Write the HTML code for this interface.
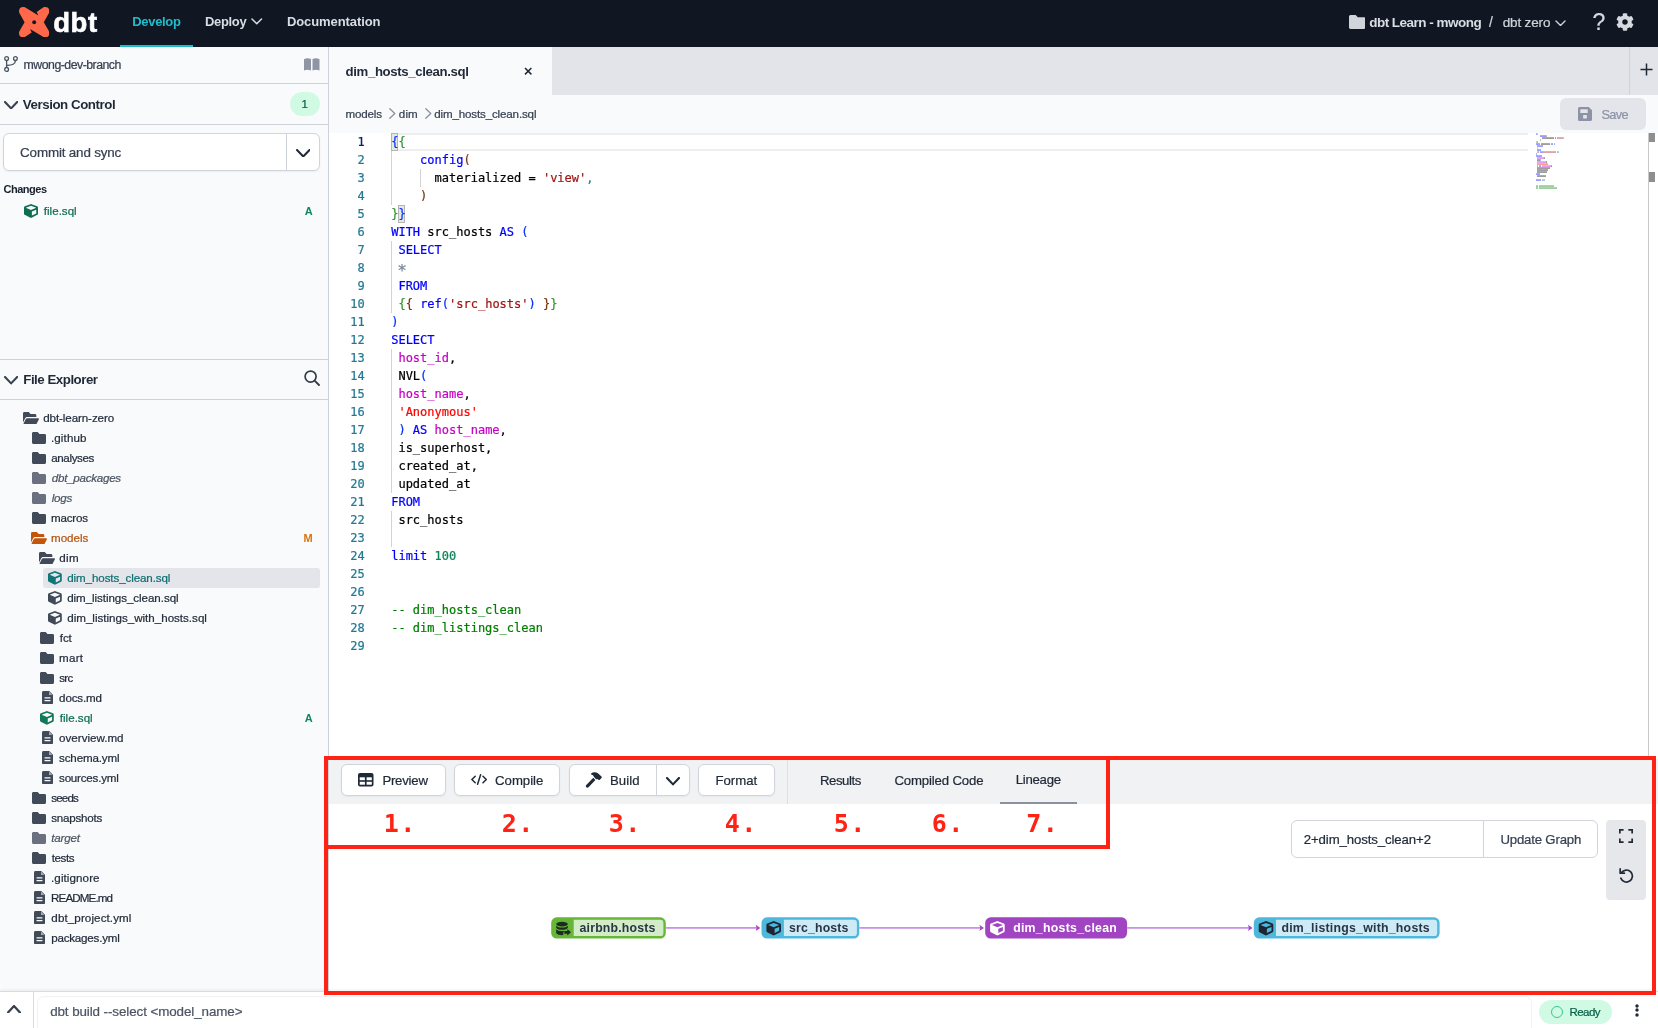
<!DOCTYPE html>
<html lang="en"><head><meta charset="utf-8"><title>dbt Cloud IDE</title><style>
html,body{margin:0;padding:0;}
body{width:1658px;height:1028px;overflow:hidden;background:#fff;font-family:"Liberation Sans",sans-serif;}
#app{position:relative;width:1658px;height:1028px;overflow:hidden;will-change:transform;}
.b{position:absolute;display:block;}
.t{position:absolute;white-space:pre;display:block;-webkit-text-stroke:0.22px currentColor;}
.mo{font-family:"DejaVu Sans Mono","Liberation Mono",monospace;}
.ln{font-family:"DejaVu Sans Mono","Liberation Mono",monospace;font-size:12px;line-height:18px;text-align:right;}
.cd{font-family:"DejaVu Sans Mono","Liberation Mono",monospace;font-size:12px;line-height:18px;}
</style></head>
<body><div id="app">
<div class="b" style="left:0px;top:0px;width:1658px;height:47px;background:#111722;"></div>
<svg class="b" style="left:18.8px;top:6.8px;" width="30.4" height="30.4" viewBox="0 0 30.4 30.4" preserveAspectRatio="none"><path fill="#ff694a" d="M0 4.2C0 1.6 1.6 0 4.2 0C5 0 5.6.15 6.3.55L19.4 8.5L17.7 4.9L24.1.55C24.8.15 25.4 0 26.2 0C28.8 0 30.4 1.6 30.4 4.2C30.4 5 30.25 5.6 29.85 6.3L24.8 15.2L29.85 24.1C30.25 24.8 30.4 25.4 30.4 26.2C30.4 28.8 28.8 30.4 26.2 30.4C25.4 30.4 24.8 30.25 24.1 29.85L11 21.9L12.7 25.5L6.3 29.85C5.6 30.25 5 30.4 4.2 30.4C1.6 30.4 0 28.8 0 26.2C0 25.4.15 24.8.55 24.1L5.6 15.2L.55 6.3C.15 5.6 0 5 0 4.2Z"/><circle cx="15.2" cy="15.2" r="1.95" fill="#111722"/></svg>
<span id="t1" class="t" style="left:53.27px;top:1.97px;font-size:27.5px;line-height:41px;color:#ffffff;font-weight:700;-webkit-text-stroke:0;letter-spacing:0.555px;-webkit-text-stroke:0.6px #fff;">dbt</span>
<span id="t2" class="t" style="left:132.27px;top:12.00px;font-size:13px;line-height:20px;color:#1cbecb;font-weight:700;-webkit-text-stroke:0;letter-spacing:-0.321px;">Develop</span>
<div class="b" style="left:120px;top:45px;width:73px;height:2px;background:#1cbecb;"></div>
<span id="t3" class="t" style="left:204.97px;top:12.00px;font-size:13px;line-height:20px;color:#dadde3;font-weight:700;-webkit-text-stroke:0;letter-spacing:-0.330px;">Deploy</span>
<svg class="b" style="left:251px;top:18.2px;" width="11.5" height="6.8" viewBox="0 0 11.5 6.8" preserveAspectRatio="none"><path d="M1 1l4.75 4.8L10.5 1" fill="none" stroke="#dadde3" stroke-width="1.5" stroke-linecap="round" stroke-linejoin="round"/></svg>
<span id="t4" class="t" style="left:286.97px;top:12.00px;font-size:13px;line-height:20px;color:#dadde3;font-weight:700;-webkit-text-stroke:0;letter-spacing:-0.091px;">Documentation</span>
<svg class="b" style="left:1348.5px;top:15px;" width="16.5" height="14" viewBox="0 64 512 384" preserveAspectRatio="none"><path fill="#d1d5db" d="M464 128H272l-64-64H48C21.49 64 0 85.49 0 112v288c0 26.51 21.49 48 48 48h416c26.51 0 48-21.49 48-48V176c0-26.51-21.49-48-48-48z"/></svg>
<span id="t5" class="t" style="left:1369.19px;top:12.72px;font-size:13.5px;line-height:20px;color:#dadde3;font-weight:700;-webkit-text-stroke:0;letter-spacing:-0.518px;">dbt Learn - mwong</span>
<span id="t6" class="t" style="left:1489.00px;top:12.05px;font-size:14px;line-height:21px;color:#d1d5db;">/</span>
<span id="t7" class="t" style="left:1502.67px;top:12.72px;font-size:13.5px;line-height:20px;color:#d1d5db;letter-spacing:-0.138px;">dbt zero</span>
<svg class="b" style="left:1555px;top:19.5px;" width="11" height="6.5" viewBox="0 0 11 6.5" preserveAspectRatio="none"><path d="M1 1l4.5 4.5L10 1" fill="none" stroke="#d1d5db" stroke-width="1.4" stroke-linecap="round" stroke-linejoin="round"/></svg>
<span id="t8" class="t" style="left:1592.50px;top:5.23px;font-size:23px;line-height:34px;color:#d6d9e0;">?</span>
<svg class="b" style="left:1616px;top:13px;" width="18" height="18" viewBox="0 0 512 512" preserveAspectRatio="none"><path fill="#d6d9e0" d="M487.4 315.7l-42.6-24.6c4.3-23.2 4.3-47 0-70.2l42.6-24.6c4.9-2.8 7.1-8.6 5.5-14-11.1-35.6-30-67.8-54.7-94.6-3.8-4.1-10-5.1-14.8-2.3L380.8 110c-17.9-15.4-38.5-27.3-60.8-35.1V25.8c0-5.6-3.9-10.5-9.4-11.7-36.7-8.2-74.3-7.8-109.2 0-5.5 1.2-9.4 6.1-9.4 11.7V75c-22.2 7.9-42.8 19.8-60.8 35.1L88.7 85.5c-4.9-2.8-11-1.9-14.8 2.3-24.7 26.7-43.6 58.9-54.7 94.6-1.7 5.4.6 11.2 5.5 14L67.3 221c-4.3 23.2-4.3 47 0 70.2l-42.6 24.6c-4.9 2.8-7.1 8.6-5.5 14 11.1 35.6 30 67.8 54.7 94.6 3.8 4.1 10 5.1 14.8 2.3l42.6-24.6c17.9 15.4 38.5 27.3 60.8 35.1v49.2c0 5.6 3.9 10.5 9.4 11.7 36.7 8.2 74.3 7.8 109.2 0 5.5-1.2 9.4-6.1 9.4-11.7v-49.2c22.2-7.9 42.8-19.8 60.8-35.1l42.6 24.6c4.9 2.8 11 1.9 14.8-2.3 24.7-26.7 43.6-58.9 54.7-94.6 1.5-5.5-.7-11.3-5.6-14.1zM256 336c-44.1 0-80-35.9-80-80s35.9-80 80-80 80 35.9 80 80-35.9 80-80 80z"/></svg>
<div class="b" style="left:0px;top:47px;width:328px;height:944px;background:#f9fafb;"></div>
<div class="b" style="left:328px;top:47px;width:1px;height:944px;background:#cdd1da;"></div>
<svg class="b" style="left:4px;top:56px;" width="14" height="16" viewBox="0 0 14 16" preserveAspectRatio="none"><g fill="none" stroke="#4b5563" stroke-width="1.3"><circle cx="2.6" cy="2.6" r="1.9"/><circle cx="11.4" cy="2.6" r="1.9"/><circle cx="2.6" cy="13.4" r="1.9"/><path d="M2.6 4.5v7M11.4 4.5c0 3.8-3 4.6-8.8 5"/></g></svg>
<span id="t9" class="t" style="left:23.61px;top:55.74px;font-size:12.3px;line-height:18px;color:#374151;letter-spacing:-0.502px;">mwong-dev-branch</span>
<svg class="b" style="left:304px;top:58px;" width="15.5" height="12.6" viewBox="0 0 15.5 12.6" preserveAspectRatio="none"><path fill="#8f95a3" d="M0 1.2C2.2 0 4.6 0 7 1v11.5C4.6 11.4 2.2 11.4 0 12.6z"/><path fill="#8f95a3" d="M15.5 1.2C13.300 0 10.900 0 8.5 1v11.5c2.4-1.1 4.8-1.1 7 .1z"/></svg>
<div class="b" style="left:0px;top:83px;width:328px;height:1px;background:#cdd1da;"></div>
<svg class="b" style="left:3.9px;top:100.8px;" width="14.2" height="8.4" viewBox="0 0 14.2 8.4" preserveAspectRatio="none"><path d="M1 1l6.1 6.4L13.2 1" fill="none" stroke="#374151" stroke-width="2.1" stroke-linecap="round" stroke-linejoin="round"/></svg>
<span id="t10" class="t" style="left:22.84px;top:94.99px;font-size:13.3px;line-height:20px;color:#1f2937;font-weight:700;-webkit-text-stroke:0;letter-spacing:-0.442px;">Version Control</span>
<div class="b" style="left:289.5px;top:92px;width:30px;height:23.5px;background:#d1fae5;border-radius:12px;"></div>
<span id="t11" class="t" style="left:301.60px;top:95.82px;font-size:11.5px;line-height:17px;color:#065f46;">1</span>
<div class="b" style="left:0px;top:124px;width:328px;height:1px;background:#cdd1da;"></div>
<div class="b" style="left:3px;top:133px;width:317px;height:38px;background:#fff;border:1px solid #d1d5db;border-radius:6px;box-sizing:border-box;box-shadow:0 1px 2px rgba(0,0,0,.06);"></div>
<div class="b" style="left:286px;top:134px;width:1px;height:35.5px;background:#cdd1da;"></div>
<span id="t12" class="t" style="left:20.09px;top:142.86px;font-size:13.4px;line-height:20px;color:#374151;letter-spacing:-0.157px;">Commit and sync</span>
<svg class="b" style="left:295.5px;top:148.5px;" width="14.5" height="8.5" viewBox="0 0 14.5 8.5" preserveAspectRatio="none"><path d="M1 1l6.25 6.5L13.5 1" fill="none" stroke="#1f2937" stroke-width="2" stroke-linecap="round" stroke-linejoin="round"/></svg>
<span id="t13" class="t" style="left:3.41px;top:181.19px;font-size:11px;line-height:16px;color:#17202e;font-weight:700;-webkit-text-stroke:0;letter-spacing:-0.468px;">Changes</span>
<svg class="b" style="left:23.8px;top:204.3px;" width="14" height="14" viewBox="0 0 512 512" preserveAspectRatio="none"><path fill="#0f6e4f" d="M239.1 6.3l-208 78c-18.7 7-31.1 25-31.1 45v225.1c0 18.2 10.3 34.8 26.5 42.9l208 104c13.5 6.8 29.4 6.8 42.9 0l208-104c16.3-8.1 26.5-24.8 26.5-42.9V129.3c0-20-12.4-37.9-31.1-44.9l-208-78C262 2.2 250 2.2 239.1 6.3zM256 68.4l192 72v1.1l-192 78-192-78v-1.1l192-72zm32 356V275.5l160-65v133.9l-160 80z"/></svg>
<span id="t14" class="t" style="left:43.84px;top:202.48px;font-size:11.6px;line-height:17px;color:#0f6e4f;letter-spacing:-0.003px;">file.sql</span>
<span id="t15" class="t" style="left:304.81px;top:203.19px;font-size:11px;line-height:16px;color:#0a8a5a;font-weight:700;-webkit-text-stroke:0;">A</span>
<div class="b" style="left:0px;top:359px;width:328px;height:1px;background:#cdd1da;"></div>
<svg class="b" style="left:3.9px;top:376.3px;" width="14.2" height="8.4" viewBox="0 0 14.2 8.4" preserveAspectRatio="none"><path d="M1 1l6.1 6.4L13.2 1" fill="none" stroke="#374151" stroke-width="2.1" stroke-linecap="round" stroke-linejoin="round"/></svg>
<span id="t16" class="t" style="left:23.27px;top:369.99px;font-size:13.3px;line-height:20px;color:#1f2937;font-weight:700;-webkit-text-stroke:0;letter-spacing:-0.483px;">File Explorer</span>
<svg class="b" style="left:304px;top:370.3px;" width="16" height="16" viewBox="0 0 16 16" preserveAspectRatio="none"><circle cx="6.6" cy="6.6" r="5.5" fill="none" stroke="#333d4c" stroke-width="1.7"/><path d="M10.6 10.6L15 15" stroke="#333d4c" stroke-width="1.9" stroke-linecap="round"/></svg>
<div class="b" style="left:0px;top:399px;width:328px;height:1px;background:#cdd1da;"></div>
<svg class="b" style="left:23px;top:412px;" width="16" height="12.3" viewBox="0 64 576 384" preserveAspectRatio="none"><path fill="#404a59" d="M572.694 292.093L500.27 416.248A63.997 63.997 0 0 1 444.989 448H45.025c-18.523 0-30.064-20.093-20.731-36.093l72.424-124.155A64 64 0 0 1 152 256h399.964c18.523 0 30.064 20.093 20.73 36.093zM152 224h328v-48c0-26.51-21.49-48-48-48H272l-64-64H48C21.49 64 0 85.49 0 112v278.046l69.077-118.418C86.214 242.25 117.989 224 152 224z"/></svg>
<span id="t17" class="t" style="left:43.22px;top:409.48px;font-size:11.6px;line-height:17px;color:#1f2937;letter-spacing:-0.096px;">dbt-learn-zero</span>
<svg class="b" style="left:32px;top:432.3px;" width="14" height="12.1" viewBox="0 64 512 384" preserveAspectRatio="none"><path fill="#404a59" d="M464 128H272l-64-64H48C21.49 64 0 85.49 0 112v288c0 26.51 21.49 48 48 48h416c26.51 0 48-21.49 48-48V176c0-26.51-21.49-48-48-48z"/></svg>
<span id="t18" class="t" style="left:50.89px;top:429.48px;font-size:11.6px;line-height:17px;color:#1f2937;letter-spacing:0.137px;">.github</span>
<svg class="b" style="left:32px;top:452.3px;" width="14" height="12.1" viewBox="0 64 512 384" preserveAspectRatio="none"><path fill="#404a59" d="M464 128H272l-64-64H48C21.49 64 0 85.49 0 112v288c0 26.51 21.49 48 48 48h416c26.51 0 48-21.49 48-48V176c0-26.51-21.49-48-48-48z"/></svg>
<span id="t19" class="t" style="left:51.22px;top:449.48px;font-size:11.6px;line-height:17px;color:#1f2937;letter-spacing:-0.376px;">analyses</span>
<svg class="b" style="left:32px;top:472.3px;" width="14" height="12.1" viewBox="0 64 512 384" preserveAspectRatio="none"><path fill="#6b7080" d="M464 128H272l-64-64H48C21.49 64 0 85.49 0 112v288c0 26.51 21.49 48 48 48h416c26.51 0 48-21.49 48-48V176c0-26.51-21.49-48-48-48z"/></svg>
<span id="t20" class="t" style="left:51.81px;top:469.48px;font-size:11.6px;line-height:17px;color:#4b5563;font-style:italic;letter-spacing:-0.260px;">dbt_packages</span>
<svg class="b" style="left:32px;top:492.3px;" width="14" height="12.1" viewBox="0 64 512 384" preserveAspectRatio="none"><path fill="#6b7080" d="M464 128H272l-64-64H48C21.49 64 0 85.49 0 112v288c0 26.51 21.49 48 48 48h416c26.51 0 48-21.49 48-48V176c0-26.51-21.49-48-48-48z"/></svg>
<span id="t21" class="t" style="left:51.83px;top:489.48px;font-size:11.6px;line-height:17px;color:#4b5563;font-style:italic;letter-spacing:-0.295px;">logs</span>
<svg class="b" style="left:32px;top:512.3px;" width="14" height="12.1" viewBox="0 64 512 384" preserveAspectRatio="none"><path fill="#404a59" d="M464 128H272l-64-64H48C21.49 64 0 85.49 0 112v288c0 26.51 21.49 48 48 48h416c26.51 0 48-21.49 48-48V176c0-26.51-21.49-48-48-48z"/></svg>
<span id="t22" class="t" style="left:51.03px;top:509.48px;font-size:11.6px;line-height:17px;color:#1f2937;letter-spacing:-0.210px;">macros</span>
<svg class="b" style="left:31px;top:532px;" width="16" height="12.3" viewBox="0 64 576 384" preserveAspectRatio="none"><path fill="#c2560c" d="M572.694 292.093L500.27 416.248A63.997 63.997 0 0 1 444.989 448H45.025c-18.523 0-30.064-20.093-20.731-36.093l72.424-124.155A64 64 0 0 1 152 256h399.964c18.523 0 30.064 20.093 20.73 36.093zM152 224h328v-48c0-26.51-21.49-48-48-48H272l-64-64H48C21.49 64 0 85.49 0 112v278.046l69.077-118.418C86.214 242.25 117.989 224 152 224z"/></svg>
<span id="t23" class="t" style="left:51.03px;top:529.48px;font-size:11.6px;line-height:17px;color:#b4530d;letter-spacing:-0.021px;">models</span>
<span id="t24" class="t" style="left:303.57px;top:530.19px;font-size:11px;line-height:16px;color:#d9730d;font-weight:700;-webkit-text-stroke:0;">M</span>
<svg class="b" style="left:39px;top:552px;" width="16" height="12.3" viewBox="0 64 576 384" preserveAspectRatio="none"><path fill="#404a59" d="M572.694 292.093L500.27 416.248A63.997 63.997 0 0 1 444.989 448H45.025c-18.523 0-30.064-20.093-20.731-36.093l72.424-124.155A64 64 0 0 1 152 256h399.964c18.523 0 30.064 20.093 20.73 36.093zM152 224h328v-48c0-26.51-21.49-48-48-48H272l-64-64H48C21.49 64 0 85.49 0 112v278.046l69.077-118.418C86.214 242.25 117.989 224 152 224z"/></svg>
<span id="t25" class="t" style="left:59.22px;top:549.48px;font-size:11.6px;line-height:17px;color:#1f2937;letter-spacing:0.333px;">dim</span>
<div class="b" style="left:43px;top:567.5px;width:276.5px;height:20px;background:#e3e5ea;border-radius:3px;"></div>
<svg class="b" style="left:48px;top:571px;" width="13.8" height="13.8" viewBox="0 0 512 512" preserveAspectRatio="none"><path fill="#0f7577" d="M239.1 6.3l-208 78c-18.7 7-31.1 25-31.1 45v225.1c0 18.2 10.3 34.8 26.5 42.9l208 104c13.5 6.8 29.4 6.8 42.9 0l208-104c16.3-8.1 26.5-24.8 26.5-42.9V129.3c0-20-12.4-37.9-31.1-44.9l-208-78C262 2.2 250 2.2 239.1 6.3zM256 68.4l192 72v1.1l-192 78-192-78v-1.1l192-72zm32 356V275.5l160-65v133.9l-160 80z"/></svg>
<span id="t26" class="t" style="left:67.22px;top:569.48px;font-size:11.6px;line-height:17px;color:#0f6f70;letter-spacing:-0.103px;">dim_hosts_clean.sql</span>
<svg class="b" style="left:48px;top:591px;" width="13.8" height="13.8" viewBox="0 0 512 512" preserveAspectRatio="none"><path fill="#404a59" d="M239.1 6.3l-208 78c-18.7 7-31.1 25-31.1 45v225.1c0 18.2 10.3 34.8 26.5 42.9l208 104c13.5 6.8 29.4 6.8 42.9 0l208-104c16.3-8.1 26.5-24.8 26.5-42.9V129.3c0-20-12.4-37.9-31.1-44.9l-208-78C262 2.2 250 2.2 239.1 6.3zM256 68.4l192 72v1.1l-192 78-192-78v-1.1l192-72zm32 356V275.5l160-65v133.9l-160 80z"/></svg>
<span id="t27" class="t" style="left:67.22px;top:589.48px;font-size:11.6px;line-height:17px;color:#1f2937;letter-spacing:-0.067px;">dim_listings_clean.sql</span>
<svg class="b" style="left:48px;top:611px;" width="13.8" height="13.8" viewBox="0 0 512 512" preserveAspectRatio="none"><path fill="#404a59" d="M239.1 6.3l-208 78c-18.7 7-31.1 25-31.1 45v225.1c0 18.2 10.3 34.8 26.5 42.9l208 104c13.5 6.8 29.4 6.8 42.9 0l208-104c16.3-8.1 26.5-24.8 26.5-42.9V129.3c0-20-12.4-37.9-31.1-44.9l-208-78C262 2.2 250 2.2 239.1 6.3zM256 68.4l192 72v1.1l-192 78-192-78v-1.1l192-72zm32 356V275.5l160-65v133.9l-160 80z"/></svg>
<span id="t28" class="t" style="left:67.22px;top:609.48px;font-size:11.6px;line-height:17px;color:#1f2937;letter-spacing:-0.006px;">dim_listings_with_hosts.sql</span>
<svg class="b" style="left:40px;top:632.3px;" width="14" height="12.1" viewBox="0 64 512 384" preserveAspectRatio="none"><path fill="#404a59" d="M464 128H272l-64-64H48C21.49 64 0 85.49 0 112v288c0 26.51 21.49 48 48 48h416c26.51 0 48-21.49 48-48V176c0-26.51-21.49-48-48-48z"/></svg>
<span id="t29" class="t" style="left:59.84px;top:629.48px;font-size:11.6px;line-height:17px;color:#1f2937;letter-spacing:-0.147px;">fct</span>
<svg class="b" style="left:40px;top:652.3px;" width="14" height="12.1" viewBox="0 64 512 384" preserveAspectRatio="none"><path fill="#404a59" d="M464 128H272l-64-64H48C21.49 64 0 85.49 0 112v288c0 26.51 21.49 48 48 48h416c26.51 0 48-21.49 48-48V176c0-26.51-21.49-48-48-48z"/></svg>
<span id="t30" class="t" style="left:59.03px;top:649.48px;font-size:11.6px;line-height:17px;color:#1f2937;letter-spacing:0.254px;">mart</span>
<svg class="b" style="left:40px;top:672.3px;" width="14" height="12.1" viewBox="0 64 512 384" preserveAspectRatio="none"><path fill="#404a59" d="M464 128H272l-64-64H48C21.49 64 0 85.49 0 112v288c0 26.51 21.49 48 48 48h416c26.51 0 48-21.49 48-48V176c0-26.51-21.49-48-48-48z"/></svg>
<span id="t31" class="t" style="left:59.16px;top:669.48px;font-size:11.6px;line-height:17px;color:#1f2937;letter-spacing:-0.673px;">src</span>
<svg class="b" style="left:41.5px;top:691.2px;" width="11" height="13.3" viewBox="0 0 11 13.5" preserveAspectRatio="none"><path fill="#404a59" d="M2 0h5.2L11 3.8V12a1.5 1.5 0 0 1-1.5 1.5h-8A1.5 1.5 0 0 1 0 12V1.5A1.5 1.5 0 0 1 1.5 0z"/><path fill="#f9fafb" d="M7 0.6V4h3.4z" opacity=".55"/><rect x="2.4" y="6.3" width="6.2" height="1.3" rx=".5" fill="#f9fafb"/><rect x="2.4" y="9.2" width="6.2" height="1.3" rx=".5" fill="#f9fafb"/></svg>
<span id="t32" class="t" style="left:59.12px;top:689.48px;font-size:11.6px;line-height:17px;color:#1f2937;letter-spacing:-0.143px;">docs.md</span>
<svg class="b" style="left:40px;top:711px;" width="13.8" height="13.8" viewBox="0 0 512 512" preserveAspectRatio="none"><path fill="#0f7a55" d="M239.1 6.3l-208 78c-18.7 7-31.1 25-31.1 45v225.1c0 18.2 10.3 34.8 26.5 42.9l208 104c13.5 6.8 29.4 6.8 42.9 0l208-104c16.3-8.1 26.5-24.8 26.5-42.9V129.3c0-20-12.4-37.9-31.1-44.9l-208-78C262 2.2 250 2.2 239.1 6.3zM256 68.4l192 72v1.1l-192 78-192-78v-1.1l192-72zm32 356V275.5l160-65v133.9l-160 80z"/></svg>
<span id="t33" class="t" style="left:59.84px;top:709.48px;font-size:11.6px;line-height:17px;color:#0f6e4f;letter-spacing:-0.003px;">file.sql</span>
<span id="t34" class="t" style="left:304.81px;top:710.19px;font-size:11px;line-height:16px;color:#0a8a5a;font-weight:700;-webkit-text-stroke:0;">A</span>
<svg class="b" style="left:41.5px;top:731.2px;" width="11" height="13.3" viewBox="0 0 11 13.5" preserveAspectRatio="none"><path fill="#404a59" d="M2 0h5.2L11 3.8V12a1.5 1.5 0 0 1-1.5 1.5h-8A1.5 1.5 0 0 1 0 12V1.5A1.5 1.5 0 0 1 1.5 0z"/><path fill="#f9fafb" d="M7 0.6V4h3.4z" opacity=".55"/><rect x="2.4" y="6.3" width="6.2" height="1.3" rx=".5" fill="#f9fafb"/><rect x="2.4" y="9.2" width="6.2" height="1.3" rx=".5" fill="#f9fafb"/></svg>
<span id="t35" class="t" style="left:59.12px;top:729.48px;font-size:11.6px;line-height:17px;color:#1f2937;letter-spacing:-0.001px;">overview.md</span>
<svg class="b" style="left:41.5px;top:751.2px;" width="11" height="13.3" viewBox="0 0 11 13.5" preserveAspectRatio="none"><path fill="#404a59" d="M2 0h5.2L11 3.8V12a1.5 1.5 0 0 1-1.5 1.5h-8A1.5 1.5 0 0 1 0 12V1.5A1.5 1.5 0 0 1 1.5 0z"/><path fill="#f9fafb" d="M7 0.6V4h3.4z" opacity=".55"/><rect x="2.4" y="6.3" width="6.2" height="1.3" rx=".5" fill="#f9fafb"/><rect x="2.4" y="9.2" width="6.2" height="1.3" rx=".5" fill="#f9fafb"/></svg>
<span id="t36" class="t" style="left:59.06px;top:749.48px;font-size:11.6px;line-height:17px;color:#1f2937;letter-spacing:-0.150px;">schema.yml</span>
<svg class="b" style="left:41.5px;top:771.2px;" width="11" height="13.3" viewBox="0 0 11 13.5" preserveAspectRatio="none"><path fill="#404a59" d="M2 0h5.2L11 3.8V12a1.5 1.5 0 0 1-1.5 1.5h-8A1.5 1.5 0 0 1 0 12V1.5A1.5 1.5 0 0 1 1.5 0z"/><path fill="#f9fafb" d="M7 0.6V4h3.4z" opacity=".55"/><rect x="2.4" y="6.3" width="6.2" height="1.3" rx=".5" fill="#f9fafb"/><rect x="2.4" y="9.2" width="6.2" height="1.3" rx=".5" fill="#f9fafb"/></svg>
<span id="t37" class="t" style="left:59.06px;top:769.48px;font-size:11.6px;line-height:17px;color:#1f2937;letter-spacing:-0.210px;">sources.yml</span>
<svg class="b" style="left:32px;top:792.3px;" width="14" height="12.1" viewBox="0 64 512 384" preserveAspectRatio="none"><path fill="#404a59" d="M464 128H272l-64-64H48C21.49 64 0 85.49 0 112v288c0 26.51 21.49 48 48 48h416c26.51 0 48-21.49 48-48V176c0-26.51-21.49-48-48-48z"/></svg>
<span id="t38" class="t" style="left:51.16px;top:789.48px;font-size:11.6px;line-height:17px;color:#1f2937;letter-spacing:-0.796px;">seeds</span>
<svg class="b" style="left:32px;top:812.3px;" width="14" height="12.1" viewBox="0 64 512 384" preserveAspectRatio="none"><path fill="#404a59" d="M464 128H272l-64-64H48C21.49 64 0 85.49 0 112v288c0 26.51 21.49 48 48 48h416c26.51 0 48-21.49 48-48V176c0-26.51-21.49-48-48-48z"/></svg>
<span id="t39" class="t" style="left:51.16px;top:809.48px;font-size:11.6px;line-height:17px;color:#1f2937;letter-spacing:-0.228px;">snapshots</span>
<svg class="b" style="left:32px;top:832.3px;" width="14" height="12.1" viewBox="0 64 512 384" preserveAspectRatio="none"><path fill="#6b7080" d="M464 128H272l-64-64H48C21.49 64 0 85.49 0 112v288c0 26.51 21.49 48 48 48h416c26.51 0 48-21.49 48-48V176c0-26.51-21.49-48-48-48z"/></svg>
<span id="t40" class="t" style="left:51.17px;top:829.48px;font-size:11.6px;line-height:17px;color:#4b5563;font-style:italic;letter-spacing:-0.162px;">target</span>
<svg class="b" style="left:32px;top:852.3px;" width="14" height="12.1" viewBox="0 64 512 384" preserveAspectRatio="none"><path fill="#404a59" d="M464 128H272l-64-64H48C21.49 64 0 85.49 0 112v288c0 26.51 21.49 48 48 48h416c26.51 0 48-21.49 48-48V176c0-26.51-21.49-48-48-48z"/></svg>
<span id="t41" class="t" style="left:51.84px;top:849.48px;font-size:11.6px;line-height:17px;color:#1f2937;letter-spacing:-0.450px;">tests</span>
<svg class="b" style="left:33.75px;top:871.2px;" width="11" height="13.3" viewBox="0 0 11 13.5" preserveAspectRatio="none"><path fill="#404a59" d="M2 0h5.2L11 3.8V12a1.5 1.5 0 0 1-1.5 1.5h-8A1.5 1.5 0 0 1 0 12V1.5A1.5 1.5 0 0 1 1.5 0z"/><path fill="#f9fafb" d="M7 0.6V4h3.4z" opacity=".55"/><rect x="2.4" y="6.3" width="6.2" height="1.3" rx=".5" fill="#f9fafb"/><rect x="2.4" y="9.2" width="6.2" height="1.3" rx=".5" fill="#f9fafb"/></svg>
<span id="t42" class="t" style="left:51.04px;top:869.48px;font-size:11.6px;line-height:17px;color:#1f2937;letter-spacing:0.093px;">.gitignore</span>
<svg class="b" style="left:33.75px;top:891.2px;" width="11" height="13.3" viewBox="0 0 11 13.5" preserveAspectRatio="none"><path fill="#404a59" d="M2 0h5.2L11 3.8V12a1.5 1.5 0 0 1-1.5 1.5h-8A1.5 1.5 0 0 1 0 12V1.5A1.5 1.5 0 0 1 1.5 0z"/><path fill="#f9fafb" d="M7 0.6V4h3.4z" opacity=".55"/><rect x="2.4" y="6.3" width="6.2" height="1.3" rx=".5" fill="#f9fafb"/><rect x="2.4" y="9.2" width="6.2" height="1.3" rx=".5" fill="#f9fafb"/></svg>
<span id="t43" class="t" style="left:51.08px;top:889.48px;font-size:11.6px;line-height:17px;color:#1f2937;letter-spacing:-0.871px;">README.md</span>
<svg class="b" style="left:33.75px;top:911.2px;" width="11" height="13.3" viewBox="0 0 11 13.5" preserveAspectRatio="none"><path fill="#404a59" d="M2 0h5.2L11 3.8V12a1.5 1.5 0 0 1-1.5 1.5h-8A1.5 1.5 0 0 1 0 12V1.5A1.5 1.5 0 0 1 1.5 0z"/><path fill="#f9fafb" d="M7 0.6V4h3.4z" opacity=".55"/><rect x="2.4" y="6.3" width="6.2" height="1.3" rx=".5" fill="#f9fafb"/><rect x="2.4" y="9.2" width="6.2" height="1.3" rx=".5" fill="#f9fafb"/></svg>
<span id="t44" class="t" style="left:51.37px;top:909.48px;font-size:11.6px;line-height:17px;color:#1f2937;letter-spacing:0.104px;">dbt_project.yml</span>
<svg class="b" style="left:33.75px;top:931.2px;" width="11" height="13.3" viewBox="0 0 11 13.5" preserveAspectRatio="none"><path fill="#404a59" d="M2 0h5.2L11 3.8V12a1.5 1.5 0 0 1-1.5 1.5h-8A1.5 1.5 0 0 1 0 12V1.5A1.5 1.5 0 0 1 1.5 0z"/><path fill="#f9fafb" d="M7 0.6V4h3.4z" opacity=".55"/><rect x="2.4" y="6.3" width="6.2" height="1.3" rx=".5" fill="#f9fafb"/><rect x="2.4" y="9.2" width="6.2" height="1.3" rx=".5" fill="#f9fafb"/></svg>
<span id="t45" class="t" style="left:51.19px;top:929.48px;font-size:11.6px;line-height:17px;color:#1f2937;letter-spacing:-0.202px;">packages.yml</span>
<div class="b" style="left:329px;top:47px;width:1329px;height:48px;background:#e2e4e9;"></div>
<div class="b" style="left:329px;top:47px;width:223px;height:48px;background:#f9fafb;"></div>
<span id="t46" class="t" style="left:345.59px;top:62.23px;font-size:13.2px;line-height:20px;color:#1f2937;font-weight:700;-webkit-text-stroke:0;letter-spacing:-0.359px;">dim_hosts_clean.sql</span>
<svg class="b" style="left:523.8px;top:67px;" width="8.4" height="8.4" viewBox="0 0 8.4 8.4" preserveAspectRatio="none"><path d="M1 1l6.4 6.4M7.4 1L1 7.4" stroke="#1f2937" stroke-width="1.5" stroke-linecap="butt"/></svg>
<div class="b" style="left:1629px;top:47px;width:1px;height:48px;background:#cfd2d8;"></div>
<svg class="b" style="left:1639.5px;top:62.5px;" width="13" height="13" viewBox="0 0 13 13" preserveAspectRatio="none"><path d="M6.5 0.5v12M0.5 6.5h12" stroke="#1f2937" stroke-width="1.5"/></svg>
<div class="b" style="left:329px;top:95px;width:1329px;height:38px;background:#f9fafb;"></div>
<span id="t47" class="t" style="left:345.43px;top:105.28px;font-size:11.6px;line-height:17px;color:#374151;letter-spacing:-0.161px;">models</span>
<svg class="b" style="left:389.3px;top:108.2px;" width="6.6" height="11" viewBox="0 0 6.6 11" preserveAspectRatio="none"><path d="M0.8 0.8L5.8 5.5L0.8 10.2" fill="none" stroke="#8a919f" stroke-width="1.3" stroke-linecap="round" stroke-linejoin="round"/></svg>
<span id="t48" class="t" style="left:398.82px;top:105.28px;font-size:11.6px;line-height:17px;color:#374151;letter-spacing:0.133px;">dim</span>
<svg class="b" style="left:425.3px;top:108.2px;" width="6.6" height="11" viewBox="0 0 6.6 11" preserveAspectRatio="none"><path d="M0.8 0.8L5.8 5.5L0.8 10.2" fill="none" stroke="#8a919f" stroke-width="1.3" stroke-linecap="round" stroke-linejoin="round"/></svg>
<span id="t49" class="t" style="left:434.22px;top:105.28px;font-size:11.6px;line-height:17px;color:#374151;letter-spacing:-0.156px;">dim_hosts_clean.sql</span>
<div class="b" style="left:1560px;top:98px;width:86px;height:32px;background:#e3e5ea;border-radius:6px;"></div>
<svg class="b" style="left:1578px;top:107px;" width="14" height="14" viewBox="0 0 14 14" preserveAspectRatio="none"><path fill="#8b93a4" d="M1.6 0h9.1L14 3.3v9.1A1.6 1.6 0 0 1 12.400 14H1.6A1.6 1.6 0 0 1 0 12.400V1.6A1.6 1.6 0 0 1 1.600 0z"/><rect x="2.3" y="2.3" width="7.4" height="3.7" fill="#e3e5ea"/><rect x="5.1" y="7.9" width="3.8" height="3.6" rx=".6" fill="#e3e5ea"/></svg>
<span id="t50" class="t" style="left:1601.47px;top:105.46px;font-size:12.8px;line-height:19px;color:#8b93a4;letter-spacing:-0.659px;">Save</span>
<div class="b" style="left:329px;top:133px;width:1329px;height:624px;background:#fff;"></div>
<div class="b" style="left:391px;top:133px;width:1137px;height:18px;border-top:2px solid #eeeeee;border-bottom:2px solid #eeeeee;box-sizing:border-box;"></div>
<div class="b" style="left:391px;top:133px;width:7px;height:18px;background:#e6e9e1;border:1px solid #b4b4b4;box-sizing:border-box;"></div>
<div class="b" style="left:398px;top:205px;width:7px;height:18px;background:#e6e9e1;border:1px solid #b4b4b4;box-sizing:border-box;"></div>
<div class="b" style="left:391px;top:151px;width:1px;height:54px;background:#d3d3d3;"></div>
<div class="b" style="left:420px;top:169px;width:1px;height:18px;background:#d3d3d3;"></div>
<div class="b" style="left:391px;top:241px;width:1px;height:72px;background:#d3d3d3;"></div>
<div class="b" style="left:391px;top:349px;width:1px;height:144px;background:#d3d3d3;"></div>
<div class="b" style="left:391px;top:511px;width:1px;height:36px;background:#d3d3d3;"></div>
<span class="t ln" style="left:330px;top:132.85px;width:34.8px;color:#0b216f;">1</span>
<span class="t cd" style="left:391.2px;top:132.85px;"><span style="color:#0431fa">{</span><span style="color:#319331">{</span></span>
<span class="t ln" style="left:330px;top:150.85px;width:34.8px;color:#237893;">2</span>
<span class="t cd" style="left:391.2px;top:150.85px;"><span style="color:#000000">    </span><span style="color:#0000ff">config</span><span style="color:#7b3814">(</span></span>
<span class="t ln" style="left:330px;top:168.85px;width:34.8px;color:#237893;">3</span>
<span class="t cd" style="left:391.2px;top:168.85px;"><span style="color:#000000">      materialized = </span><span style="color:#a31515">'view'</span><span style="color:#3b8080">,</span></span>
<span class="t ln" style="left:330px;top:186.85px;width:34.8px;color:#237893;">4</span>
<span class="t cd" style="left:391.2px;top:186.85px;"><span style="color:#000000">    </span><span style="color:#7b3814">)</span></span>
<span class="t ln" style="left:330px;top:204.85px;width:34.8px;color:#237893;">5</span>
<span class="t cd" style="left:391.2px;top:204.85px;"><span style="color:#319331">}</span><span style="color:#0431fa">}</span></span>
<span class="t ln" style="left:330px;top:222.85px;width:34.8px;color:#237893;">6</span>
<span class="t cd" style="left:391.2px;top:222.85px;"><span style="color:#0000ff">WITH</span><span style="color:#000000"> src_hosts </span><span style="color:#0000ff">AS</span><span style="color:#000000"> </span><span style="color:#0431fa">(</span></span>
<span class="t ln" style="left:330px;top:240.85px;width:34.8px;color:#237893;">7</span>
<span class="t cd" style="left:391.2px;top:240.85px;"><span style="color:#0000ff"> SELECT</span></span>
<span class="t ln" style="left:330px;top:258.85px;width:34.8px;color:#237893;">8</span>
<span class="t cd" style="left:391.2px;top:258.85px;"> <span style="color:#778899;font-size:16px;line-height:0;position:relative;top:4.5px;left:-1.2px;">*</span></span>
<span class="t ln" style="left:330px;top:276.85px;width:34.8px;color:#237893;">9</span>
<span class="t cd" style="left:391.2px;top:276.85px;"><span style="color:#0000ff"> FROM</span></span>
<span class="t ln" style="left:330px;top:294.85px;width:34.8px;color:#237893;">10</span>
<span class="t cd" style="left:391.2px;top:294.85px;"><span style="color:#000000"> </span><span style="color:#319331">{</span><span style="color:#7b3814">{</span><span style="color:#000000"> </span><span style="color:#0000ff">ref</span><span style="color:#0431fa">(</span><span style="color:#a31515">'src_hosts'</span><span style="color:#0431fa">)</span><span style="color:#000000"> </span><span style="color:#7b3814">}</span><span style="color:#319331">}</span></span>
<span class="t ln" style="left:330px;top:312.85px;width:34.8px;color:#237893;">11</span>
<span class="t cd" style="left:391.2px;top:312.85px;"><span style="color:#0431fa">)</span></span>
<span class="t ln" style="left:330px;top:330.85px;width:34.8px;color:#237893;">12</span>
<span class="t cd" style="left:391.2px;top:330.85px;"><span style="color:#0000ff">SELECT</span></span>
<span class="t ln" style="left:330px;top:348.85px;width:34.8px;color:#237893;">13</span>
<span class="t cd" style="left:391.2px;top:348.85px;"><span style="color:#c700c7"> host_id</span><span style="color:#000000">,</span></span>
<span class="t ln" style="left:330px;top:366.85px;width:34.8px;color:#237893;">14</span>
<span class="t cd" style="left:391.2px;top:366.85px;"><span style="color:#000000"> NVL</span><span style="color:#0431fa">(</span></span>
<span class="t ln" style="left:330px;top:384.85px;width:34.8px;color:#237893;">15</span>
<span class="t cd" style="left:391.2px;top:384.85px;"><span style="color:#c700c7"> host_name</span><span style="color:#000000">,</span></span>
<span class="t ln" style="left:330px;top:402.85px;width:34.8px;color:#237893;">16</span>
<span class="t cd" style="left:391.2px;top:402.85px;"><span style="color:#ff0000"> 'Anonymous'</span></span>
<span class="t ln" style="left:330px;top:420.85px;width:34.8px;color:#237893;">17</span>
<span class="t cd" style="left:391.2px;top:420.85px;"><span style="color:#0431fa"> )</span><span style="color:#0000ff"> AS</span><span style="color:#c700c7"> host_name</span><span style="color:#000000">,</span></span>
<span class="t ln" style="left:330px;top:438.85px;width:34.8px;color:#237893;">18</span>
<span class="t cd" style="left:391.2px;top:438.85px;"><span style="color:#000000"> is_superhost,</span></span>
<span class="t ln" style="left:330px;top:456.85px;width:34.8px;color:#237893;">19</span>
<span class="t cd" style="left:391.2px;top:456.85px;"><span style="color:#000000"> created_at,</span></span>
<span class="t ln" style="left:330px;top:474.85px;width:34.8px;color:#237893;">20</span>
<span class="t cd" style="left:391.2px;top:474.85px;"><span style="color:#000000"> updated_at</span></span>
<span class="t ln" style="left:330px;top:492.85px;width:34.8px;color:#237893;">21</span>
<span class="t cd" style="left:391.2px;top:492.85px;"><span style="color:#0000ff">FROM</span></span>
<span class="t ln" style="left:330px;top:510.85px;width:34.8px;color:#237893;">22</span>
<span class="t cd" style="left:391.2px;top:510.85px;"><span style="color:#000000"> src_hosts</span></span>
<span class="t ln" style="left:330px;top:528.85px;width:34.8px;color:#237893;">23</span>
<span class="t ln" style="left:330px;top:546.85px;width:34.8px;color:#237893;">24</span>
<span class="t cd" style="left:391.2px;top:546.85px;"><span style="color:#0000ff">limit</span><span style="color:#000000"> </span><span style="color:#098658">100</span></span>
<span class="t ln" style="left:330px;top:564.85px;width:34.8px;color:#237893;">25</span>
<span class="t ln" style="left:330px;top:582.85px;width:34.8px;color:#237893;">26</span>
<span class="t ln" style="left:330px;top:600.85px;width:34.8px;color:#237893;">27</span>
<span class="t cd" style="left:391.2px;top:600.85px;"><span style="color:#008000">-- dim_hosts_clean</span></span>
<span class="t ln" style="left:330px;top:618.85px;width:34.8px;color:#237893;">28</span>
<span class="t cd" style="left:391.2px;top:618.85px;"><span style="color:#008000">-- dim_listings_clean</span></span>
<span class="t ln" style="left:330px;top:636.85px;width:34.8px;color:#237893;">29</span>
<svg class="b" style="left:1536.2px;top:133px;" width="60" height="60" viewBox="0 0 60 60" preserveAspectRatio="none"><rect x="0" y="0.4" width="1" height="1.3" fill="#0431fa" opacity=".55"/><rect x="1" y="0.4" width="1" height="1.3" fill="#319331" opacity=".55"/><rect x="4" y="2.4" width="6" height="1.3" fill="#0000ff" opacity=".55"/><rect x="10" y="2.4" width="1" height="1.3" fill="#7b3814" opacity=".55"/><rect x="6" y="4.4" width="12" height="1.3" fill="#000000" opacity=".55"/><rect x="19" y="4.4" width="1" height="1.3" fill="#000000" opacity=".55"/><rect x="21" y="4.4" width="6" height="1.3" fill="#a31515" opacity=".55"/><rect x="27" y="4.4" width="1" height="1.3" fill="#3b8080" opacity=".55"/><rect x="4" y="6.4" width="1" height="1.3" fill="#7b3814" opacity=".55"/><rect x="0" y="8.4" width="1" height="1.3" fill="#319331" opacity=".55"/><rect x="1" y="8.4" width="1" height="1.3" fill="#0431fa" opacity=".55"/><rect x="0" y="10.4" width="4" height="1.3" fill="#0000ff" opacity=".55"/><rect x="5" y="10.4" width="9" height="1.3" fill="#000000" opacity=".55"/><rect x="15" y="10.4" width="2" height="1.3" fill="#0000ff" opacity=".55"/><rect x="18" y="10.4" width="1" height="1.3" fill="#0431fa" opacity=".55"/><rect x="1" y="12.4" width="6" height="1.3" fill="#0000ff" opacity=".55"/><rect x="1" y="14.4" width="1" height="1.3" fill="#778899" opacity=".55"/><rect x="1" y="16.4" width="4" height="1.3" fill="#0000ff" opacity=".55"/><rect x="1" y="18.4" width="1" height="1.3" fill="#319331" opacity=".55"/><rect x="2" y="18.4" width="1" height="1.3" fill="#7b3814" opacity=".55"/><rect x="4" y="18.4" width="3" height="1.3" fill="#0000ff" opacity=".55"/><rect x="7" y="18.4" width="1" height="1.3" fill="#0431fa" opacity=".55"/><rect x="8" y="18.4" width="11" height="1.3" fill="#a31515" opacity=".55"/><rect x="19" y="18.4" width="1" height="1.3" fill="#0431fa" opacity=".55"/><rect x="21" y="18.4" width="1" height="1.3" fill="#7b3814" opacity=".55"/><rect x="22" y="18.4" width="1" height="1.3" fill="#319331" opacity=".55"/><rect x="0" y="20.4" width="1" height="1.3" fill="#0431fa" opacity=".55"/><rect x="0" y="22.4" width="6" height="1.3" fill="#0000ff" opacity=".55"/><rect x="1" y="24.4" width="7" height="1.3" fill="#c700c7" opacity=".55"/><rect x="8" y="24.4" width="1" height="1.3" fill="#000000" opacity=".55"/><rect x="1" y="26.4" width="3" height="1.3" fill="#000000" opacity=".55"/><rect x="4" y="26.4" width="1" height="1.3" fill="#0431fa" opacity=".55"/><rect x="1" y="28.4" width="9" height="1.3" fill="#c700c7" opacity=".55"/><rect x="10" y="28.4" width="1" height="1.3" fill="#000000" opacity=".55"/><rect x="1" y="30.4" width="11" height="1.3" fill="#ff0000" opacity=".55"/><rect x="1" y="32.4" width="1" height="1.3" fill="#0431fa" opacity=".55"/><rect x="3" y="32.4" width="2" height="1.3" fill="#0000ff" opacity=".55"/><rect x="6" y="32.4" width="9" height="1.3" fill="#c700c7" opacity=".55"/><rect x="15" y="32.4" width="1" height="1.3" fill="#000000" opacity=".55"/><rect x="1" y="34.4" width="13" height="1.3" fill="#000000" opacity=".55"/><rect x="1" y="36.4" width="11" height="1.3" fill="#000000" opacity=".55"/><rect x="1" y="38.4" width="10" height="1.3" fill="#000000" opacity=".55"/><rect x="0" y="40.4" width="4" height="1.3" fill="#0000ff" opacity=".55"/><rect x="1" y="42.4" width="9" height="1.3" fill="#000000" opacity=".55"/><rect x="0" y="46.4" width="5" height="1.3" fill="#0000ff" opacity=".55"/><rect x="6" y="46.4" width="3" height="1.3" fill="#098658" opacity=".55"/><rect x="0" y="52.4" width="2" height="1.3" fill="#008000" opacity=".55"/><rect x="3" y="52.4" width="15" height="1.3" fill="#008000" opacity=".55"/><rect x="0" y="54.4" width="2" height="1.3" fill="#008000" opacity=".55"/><rect x="3" y="54.4" width="18" height="1.3" fill="#008000" opacity=".55"/></svg>
<div class="b" style="left:1648px;top:133px;width:1px;height:624px;background:#c9c9c9;"></div>
<div class="b" style="left:1649px;top:133px;width:6px;height:9px;background:#8e8e8e;"></div>
<div class="b" style="left:1649px;top:172px;width:6px;height:10px;background:#8e8e8e;"></div>
<div class="b" style="left:329px;top:757px;width:1329px;height:234px;background:#fff;"></div>
<div class="b" style="left:329px;top:759px;width:1329px;height:45px;background:#f1f2f4;"></div>
<div class="b" style="left:341px;top:764px;width:104.5px;height:32px;background:#fff;border:1px solid #d1d5db;border-radius:6px;box-sizing:border-box;box-shadow:0 1px 2px rgba(0,0,0,.05);"></div>
<svg class="b" style="left:358px;top:773px;" width="15.5" height="13.5" viewBox="0 0 15.5 13.5" preserveAspectRatio="none"><rect x="0" y="0" width="15.5" height="13.4" rx="2" fill="#1f2937"/><rect x="1.7" y="4.3" width="5.2" height="2.9" fill="#fff"/><rect x="8.6" y="4.3" width="5.2" height="2.9" fill="#fff"/><rect x="1.7" y="8.8" width="5.2" height="2.9" fill="#fff"/><rect x="8.6" y="8.800" width="5.2" height="2.9" fill="#fff"/></svg>
<span id="t51" class="t" style="left:382.39px;top:771.13px;font-size:13.2px;line-height:20px;color:#1f2937;letter-spacing:-0.221px;">Preview</span>
<div class="b" style="left:454px;top:764px;width:106.3px;height:32px;background:#fff;border:1px solid #d1d5db;border-radius:6px;box-sizing:border-box;box-shadow:0 1px 2px rgba(0,0,0,.05);"></div>
<svg class="b" style="left:470.5px;top:774.3px;" width="16.2" height="11" viewBox="0 0 16.2 11" preserveAspectRatio="none"><g fill="none" stroke="#1f2937" stroke-width="1.500" stroke-linecap="round" stroke-linejoin="round"><path d="M4.2 2.200L0.900 5.500L4.200 8.800M12 2.200L15.300 5.500L12 8.800M9.600 0.800L6.600 10.200"/></g></svg>
<span id="t52" class="t" style="left:495.09px;top:771.13px;font-size:13.2px;line-height:20px;color:#1f2937;letter-spacing:-0.024px;">Compile</span>
<div class="b" style="left:569px;top:764px;width:120.5px;height:32px;background:#fff;border:1px solid #d1d5db;border-radius:6px;box-sizing:border-box;box-shadow:0 1px 2px rgba(0,0,0,.05);"></div>
<div class="b" style="left:656px;top:765px;width:1px;height:30px;background:#d1d5db;"></div>
<svg class="b" style="left:585px;top:771.5px;" width="17" height="16" viewBox="0 0 17 16" preserveAspectRatio="none"><g fill="#1f2937"><path d="M6.200 1.200C8.200-.2 11-.2 12.900 1.300l3.600 3.300c.4.400.4 1 0 1.400l-1.700 1.700c-.4.400-1 .4-1.400 0l-.7-.7c-.5.300-1.200.3-1.700-.1L9.400 5.400 8 3.200 6.200 2.400z"/><path d="M8.300 5.800l2.100 2.100-6.900 7.300c-.6.600-1.600.600-2.200 0s-.6-1.600 0-2.200z"/></g></svg>
<span id="t53" class="t" style="left:609.89px;top:771.13px;font-size:13.2px;line-height:20px;color:#1f2937;letter-spacing:0.101px;">Build</span>
<svg class="b" style="left:665.5px;top:777.2px;" width="14" height="8.4" viewBox="0 0 14 8.4" preserveAspectRatio="none"><path d="M1 1l6 6.4L13 1" fill="none" stroke="#1f2937" stroke-width="2.1" stroke-linecap="round" stroke-linejoin="round"/></svg>
<div class="b" style="left:698px;top:764px;width:77px;height:32px;background:#fff;border:1px solid #d1d5db;border-radius:6px;box-sizing:border-box;box-shadow:0 1px 2px rgba(0,0,0,.05);"></div>
<span id="t54" class="t" style="left:715.39px;top:771.13px;font-size:13.2px;line-height:20px;color:#1f2937;letter-spacing:0.019px;">Format</span>
<div class="b" style="left:787px;top:760px;width:1px;height:43.7px;background:#dcdfe4;"></div>
<span id="t55" class="t" style="left:819.89px;top:771.13px;font-size:13.2px;line-height:20px;color:#1f2937;letter-spacing:-0.401px;">Results</span>
<span id="t56" class="t" style="left:894.39px;top:771.13px;font-size:13.2px;line-height:20px;color:#1f2937;letter-spacing:-0.142px;">Compiled Code</span>
<span id="t57" class="t" style="left:1015.69px;top:770.13px;font-size:13.2px;line-height:20px;color:#1f2937;letter-spacing:-0.251px;">Lineage</span>
<div class="b" style="left:1000px;top:802px;width:76.5px;height:2px;background:#8b909d;"></div>
<div class="b" style="left:1291px;top:820px;width:307px;height:38px;background:#fff;border:1px solid #d1d5db;border-radius:6px;box-sizing:border-box;"></div>
<div class="b" style="left:1483px;top:821px;width:1px;height:36px;background:#d1d5db;"></div>
<span id="t58" class="t" style="left:1303.72px;top:830.23px;font-size:13.2px;line-height:20px;color:#1f2937;letter-spacing:-0.096px;">2+dim_hosts_clean+2</span>
<span id="t59" class="t" style="left:1500.49px;top:830.23px;font-size:13.2px;line-height:20px;color:#374151;letter-spacing:-0.186px;">Update Graph</span>
<div class="b" style="left:1606px;top:820px;width:40px;height:80px;background:#e5e7eb;border-radius:4px;"></div>
<svg class="b" style="left:1619px;top:829px;" width="14" height="14" viewBox="0 0 14 14" preserveAspectRatio="none"><g fill="none" stroke="#1f2937" stroke-width="1.700"><path d="M0.850 4.600V0.850H4.600M9.400 0.850h3.750V4.600M13.150 9.400v3.750H9.400M4.600 13.150H0.850V9.400"/></g></svg>
<svg class="b" style="left:1618.8px;top:867.8px;" width="15" height="15" viewBox="0 0 14 14" preserveAspectRatio="none"><g fill="none" stroke="#1f2937" stroke-width="1.600" stroke-linecap="round" stroke-linejoin="round"><path d="M2.300 4.300A5.600 5.600 0 1 1 1.700 9.500"/><path d="M1.100 0.900v3.900h3.900"/></g></svg>
<svg class="b" style="left:540px;top:910px;" width="910" height="36" viewBox="540 910 910 36"><rect x="551.2" y="917.3" width="114.6" height="21.2" rx="5.5" fill="#66b738"/><path fill="#d3ecc8" d="M573.7 919.7H660.2A3.2 3.2 0 0 1 663.4 922.9V932.9A3.2 3.2 0 0 1 660.2 936.1H573.7Z"/><g fill="#1d2b22" transform="translate(556.1 921.8)"><ellipse cx="5.9" cy="2.3" rx="5.8" ry="2.3"/><path d="M0.1 3.9c1.100 1.300 3.400 1.800 5.800 1.800s4.700-.5 5.800-1.800v2.200c-1.100 1.300-3.400 1.800-5.800 1.800s-4.700-.5-5.800-1.800z"/><path d="M0.100 7.500c1.100 1.300 3.400 1.800 5.800 1.800.6 0 1.200 0 1.800-.1v1.600h-.5v2.500c-.4 0-.9.100-1.300.100-2.400 0-4.700-.7-5.800-2z"/><path d="M8.200 9.100h3V7.200l3.700 3.300-3.700 3.300v-1.900h-3z"/></g><rect x="761.5" y="917.3" width="97.8" height="21.2" rx="5.5" fill="#4db7dc"/><path fill="#cdebf6" d="M783.9 919.7H853.7A3.2 3.2 0 0 1 856.9 922.9V932.9A3.2 3.2 0 0 1 853.7 936.1H783.9Z"/><g transform="translate(766.4 921) scale(0.0285156)"><path fill="#1d2533" d="M239.1 6.3l-208 78c-18.7 7-31.1 25-31.1 45v225.1c0 18.2 10.3 34.8 26.5 42.9l208 104c13.5 6.8 29.4 6.8 42.9 0l208-104c16.3-8.1 26.5-24.8 26.5-42.9V129.3c0-20-12.4-37.9-31.1-44.9l-208-78C262 2.2 250 2.2 239.1 6.3zM256 68.4l192 72v1.1l-192 78-192-78v-1.1l192-72zm32 356V275.5l160-65v133.9l-160 80z"/></g><rect x="985.2" y="917.3" width="141.9" height="21.2" rx="5.5" fill="#a044c2"/><g transform="translate(990.1 921) scale(0.0285156)"><path fill="#ffffff" d="M239.1 6.3l-208 78c-18.7 7-31.1 25-31.1 45v225.1c0 18.2 10.3 34.8 26.5 42.9l208 104c13.5 6.8 29.4 6.8 42.9 0l208-104c16.3-8.1 26.5-24.8 26.5-42.9V129.3c0-20-12.4-37.9-31.1-44.9l-208-78C262 2.2 250 2.2 239.1 6.3zM256 68.4l192 72v1.1l-192 78-192-78v-1.1l192-72zm32 356V275.5l160-65v133.9l-160 80z"/></g><rect x="1253.8" y="917.3" width="185.8" height="21.2" rx="5.5" fill="#4db7dc"/><path fill="#cdebf6" d="M1276 919.7H1434A3.2 3.2 0 0 1 1437.2 922.9V932.9A3.2 3.2 0 0 1 1434 936.1H1276Z"/><g transform="translate(1258.7 921) scale(0.0285156)"><path fill="#1d2533" d="M239.1 6.3l-208 78c-18.7 7-31.1 25-31.1 45v225.1c0 18.2 10.3 34.8 26.5 42.9l208 104c13.5 6.8 29.4 6.8 42.9 0l208-104c16.3-8.1 26.5-24.8 26.5-42.9V129.3c0-20-12.4-37.9-31.1-44.9l-208-78C262 2.2 250 2.2 239.1 6.3zM256 68.4l192 72v1.1l-192 78-192-78v-1.1l192-72zm32 356V275.5l160-65v133.9l-160 80z"/></g><rect x="665.8" y="927.05" width="91.5" height="1.7" fill="#c98de2"/><path d="M755.7 924.8L760.3 927.9L755.7 931L756.6 927.9Z" fill="#a746c9"/><rect x="859.3" y="927.05" width="121.7" height="1.7" fill="#c98de2"/><path d="M979.4 924.8L984 927.9L979.4 931L980.3 927.9Z" fill="#a746c9"/><rect x="1127.1" y="927.05" width="122.5" height="1.7" fill="#c98de2"/><path d="M1248 924.8L1252.6 927.9L1248 931L1248.9 927.9Z" fill="#a746c9"/></svg>
<span id="t60" class="t" style="left:579.61px;top:919.14px;font-size:12.3px;line-height:18px;color:#2b3445;font-weight:700;-webkit-text-stroke:0;letter-spacing:0.167px;">airbnb.hosts</span>
<span id="t61" class="t" style="left:789.11px;top:919.14px;font-size:12.3px;line-height:18px;color:#2b3445;font-weight:700;-webkit-text-stroke:0;letter-spacing:0.148px;">src_hosts</span>
<span id="t62" class="t" style="left:1013.13px;top:919.14px;font-size:12.3px;line-height:18px;color:#ffffff;font-weight:700;-webkit-text-stroke:0;letter-spacing:0.280px;">dim_hosts_clean</span>
<span id="t63" class="t" style="left:1281.43px;top:919.14px;font-size:12.3px;line-height:18px;color:#2b3445;font-weight:700;-webkit-text-stroke:0;letter-spacing:0.246px;">dim_listings_with_hosts</span>
<div class="b" style="left:0px;top:991px;width:1658px;height:37px;background:#fff;border-top:1px solid #d9dce1;box-sizing:border-box;box-shadow:0 -1px 3px rgba(0,0,0,.07);"></div>
<div class="b" style="left:37px;top:996px;width:1495px;height:40px;border:1px solid #f1f2f4;border-radius:7px;box-sizing:border-box;"></div>
<div class="b" style="left:33px;top:992px;width:1px;height:36px;background:#d8dbe0;"></div>
<svg class="b" style="left:7px;top:1004.8px;" width="14" height="8.6" viewBox="0 0 14 8.6" preserveAspectRatio="none"><path d="M1 7.6L7 1L13 7.6" fill="none" stroke="#374151" stroke-width="2.2" stroke-linecap="round" stroke-linejoin="round"/></svg>
<span id="t64" class="t" style="left:50.17px;top:1002.46px;font-size:13.4px;line-height:20px;color:#4b5563;letter-spacing:-0.089px;">dbt build --select &lt;model_name&gt;</span>
<div class="b" style="left:1539px;top:1000px;width:73px;height:24px;background:#d1fae5;border-radius:12px;"></div>
<div class="b" style="left:1551px;top:1006px;width:12px;height:12px;border:1.4px solid #34c796;border-radius:50%;box-sizing:border-box;"></div>
<span id="t65" class="t" style="left:1569.45px;top:1003.52px;font-size:11.5px;line-height:17px;color:#065f46;letter-spacing:-0.534px;">Ready</span>
<svg class="b" style="left:1635px;top:1003.5px;" width="4" height="4" viewBox="0 0 4 4" preserveAspectRatio="none"><circle cx="2" cy="2" r="1.7" fill="#1f2937"/></svg>
<svg class="b" style="left:1635px;top:1008.4px;" width="4" height="4" viewBox="0 0 4 4" preserveAspectRatio="none"><circle cx="2" cy="2" r="1.7" fill="#1f2937"/></svg>
<svg class="b" style="left:1635px;top:1013.3px;" width="4" height="4" viewBox="0 0 4 4" preserveAspectRatio="none"><circle cx="2" cy="2" r="1.7" fill="#1f2937"/></svg>
<div class="b" style="left:324px;top:756px;width:1332px;height:239px;border:4px solid #ff2315;box-sizing:border-box;"></div>
<div class="b" style="left:324px;top:756px;width:786px;height:93px;border:4px solid #ff2315;box-sizing:border-box;"></div>
<span id="t66" class="t mo" style="left:383.70px;top:805.35px;font-size:25px;line-height:38px;color:#ff2315;font-weight:700;-webkit-text-stroke:0;letter-spacing:1.5px;">1.</span>
<span id="t67" class="t mo" style="left:501.70px;top:805.35px;font-size:25px;line-height:38px;color:#ff2315;font-weight:700;-webkit-text-stroke:0;letter-spacing:1.5px;">2.</span>
<span id="t68" class="t mo" style="left:608.70px;top:805.35px;font-size:25px;line-height:38px;color:#ff2315;font-weight:700;-webkit-text-stroke:0;letter-spacing:1.5px;">3.</span>
<span id="t69" class="t mo" style="left:724.70px;top:805.35px;font-size:25px;line-height:38px;color:#ff2315;font-weight:700;-webkit-text-stroke:0;letter-spacing:1.5px;">4.</span>
<span id="t70" class="t mo" style="left:833.70px;top:805.35px;font-size:25px;line-height:38px;color:#ff2315;font-weight:700;-webkit-text-stroke:0;letter-spacing:1.5px;">5.</span>
<span id="t71" class="t mo" style="left:931.70px;top:805.35px;font-size:25px;line-height:38px;color:#ff2315;font-weight:700;-webkit-text-stroke:0;letter-spacing:1.5px;">6.</span>
<span id="t72" class="t mo" style="left:1026.20px;top:805.35px;font-size:25px;line-height:38px;color:#ff2315;font-weight:700;-webkit-text-stroke:0;letter-spacing:1.5px;">7.</span>
</div></body></html>
